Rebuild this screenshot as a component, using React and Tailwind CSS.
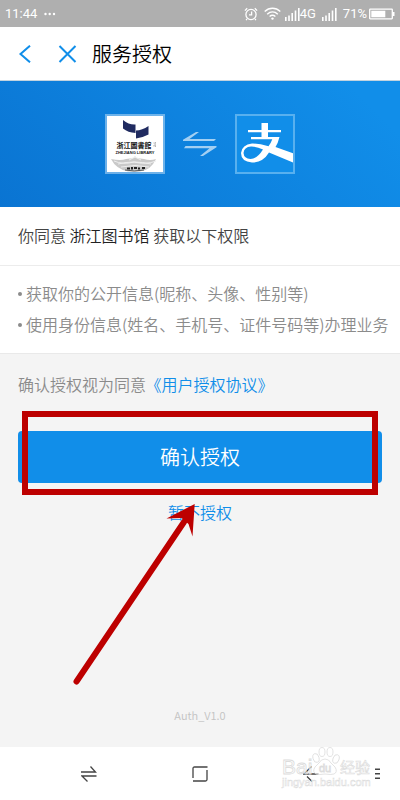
const ICON_TEXT = "'Noto Sans CJK SC', sans-serif";

function AlarmIcon() {
  return (
    <svg width="14" height="14" viewBox="0 0 14 14" fill="none" stroke="currentColor" strokeWidth="1.3" aria-hidden="true">
      <circle cx="7" cy="7.5" r="5.1" />
      <path d="M7.6 4.6v3.3H5M.9 3.6 3.2 1.2M13.1 3.6 10.8 1.2M3 12l-.9 1.2M11 12l.9 1.2" />
    </svg>
  );
}

function WifiIcon() {
  return (
    <svg width="17" height="13" viewBox="0 0 17 13" fill="none" stroke="currentColor" strokeWidth="1.4" aria-hidden="true">
      <path d="M.7 4.6c4.6-4.4 11-4.4 15.6 0M3.2 7.2c3.2-3 7.4-3 10.6 0M5.6 9.5c1.9-1.6 3.9-1.6 5.8 0" />
      <circle cx="8.5" cy="11.6" r="1.2" fill="currentColor" stroke="none" />
    </svg>
  );
}

function SignalIcon() {
  return (
    <svg width="15" height="14" viewBox="0 0 15 14" fill="currentColor" aria-hidden="true">
      <path d="M0 10h1.6v4H0zM3.2 8.4h1.6V14H3.2zM6.4 6h1.6v8H6.4zM9.7 3.5h1.6V14H9.7zM13 1h1.6v13H13z" />
    </svg>
  );
}

function BatteryIcon() {
  return (
    <svg width="26" height="12" viewBox="0 0 26 12" aria-hidden="true">
      <rect x=".7" y="1.2" width="22.6" height="9.6" rx=".5" fill="none" stroke="currentColor" strokeWidth="1.3" />
      <path d="M2.3 2.8h14v6.4h-14zM23.5 4h2v4h-2z" fill="currentColor" />
    </svg>
  );
}

function LibraryLogo() {
  return (
    <svg width="56" height="56" viewBox="0 0 56 56" role="img" aria-label="浙江图书馆">
      <path fill="#fff" d="M0 0h56v56H0z" />
      <path d="M16 4q6 5 12.500 4.500v8.500Q21 16.500 16 12.500z" fill="#202b60" />
      <path d="M29 14.500q6-.2 12.500-4.500v8.500Q36 21.500 29 22.500z" fill="#202b60" />
      <text x="27" y="32" textAnchor="middle" fontSize="7" fontWeight="700" fill="#111" fontFamily={ICON_TEXT}>浙江圖書館</text>
      <path d="M47 26.500v1M47 29v1.500M48.500 26l-.5 2 .5 3" stroke="#777" strokeWidth=".6" fill="none" />
      <text x="28" y="38" textAnchor="middle" fontSize="4" fontWeight="700" fill="#111" fontFamily="'Liberation Sans', sans-serif">ZHEJIANG LIBRARY</text>
      <path d="M4 43q10 2 15 0l8-1 1-2 1 2 8 1q6 2 12 0-5 11-16 12.500H21Q9 53 4 43z" fill="#c9c9c9" />
      <path d="M7 45q9 4 20 1 12 3 22-1M11 48q16-4 33 0M22 44l6-3 6 3M14 51q14-3 28 0" fill="none" stroke="#eee" strokeWidth="1" />
      <path d="M20 51.500h3v2h-3zM24 51h2v2.500h-2zM27 51h3v2h-3zM31 51.500h2v2h-2zM35 51h3v2h-3z" fill="#222" />
      <path d="M18 54q9 2 19 0" fill="none" stroke="#555" strokeWidth="1" />
    </svg>
  );
}

function AlipayLogo() {
  return (
    <svg width="56" height="56" viewBox="0 0 56 56" role="img" aria-label="支付宝">
      <path fill="#fff" d="M24.500 7H31v7h13v2.300H31v4.700h11.500Q41 27 38.500 31L56 37.300V46.500L32 36.500Q26 46.500 15 46.500 4 45.500 4 37 5 28.500 15 27.500q7-.2 16.500 2.800 2.500-3.300 3.800-7H14v-2.300h10.500v-4.700H11V14h13.500z" />
      <path fill="#118ee9" d="M6.500 37q.5-6 7.500-6.500 5.500-.2 12 3-6 9.500-12.500 9.500-6.500-.3-7-6z" />
    </svg>
  );
}

function ExchangeIcon() {
  return (
    <svg width="34" height="26" viewBox="0 0 34 26" fill="#fff" fillOpacity=".62" aria-hidden="true">
      <path d="M13 1h3L6.500 8H33l-2 2H0v-1.200zM2.500 15H33.500v1.200L20 25h-3l9.500-7.700H1z" />
    </svg>
  );
}

function Watermark() {
  return (
    <svg className="pointer-events-none absolute right-6 top-0" width="98" height="48" viewBox="0 0 98 48" fill="#fff" stroke="#dcdcdc" strokeWidth=".8" aria-hidden="true" fontFamily="'Liberation Sans', sans-serif">
      <g fillOpacity=".55">
        <text x="4" y="27" fontSize="21">Bai</text>
        <path d="M47 12q4 0 6 4l4 4q3 5-1 7-3 1-9 0-6 1-9 0-4-2-1-7l4-4q2-4 6-4z" />
        <ellipse cx="44" cy="5" rx="3" ry="4.500" />
        <ellipse cx="52" cy="5" rx="3" ry="4.500" />
        <ellipse cx="38" cy="11" rx="3" ry="4.500" transform="rotate(-15 38 11)" />
        <ellipse cx="58" cy="12" rx="3" ry="4.500" transform="rotate(20 58 12)" />
        <text x="41" y="25" fontSize="11">du</text>
        <text x="62" y="26" fontSize="15" fontWeight="400" strokeWidth=".6" fontFamily={ICON_TEXT}>经验</text>
        <text x="4" y="39" fontSize="11" strokeWidth=".5">jingyan.baidu.com</text>
      </g>
    </svg>
  );
}

function Arrow() {
  return (
    <svg className="pointer-events-none absolute left-1/2 top-0 -ml-32" width="128" height="184" viewBox="0 0 128 184" aria-hidden="true">
      <path d="M4.500 178.500 112 19" stroke="#bd0000" strokeWidth="6" strokeLinecap="round" />
      <path d="M122.700 1 94.500 15.500l15-.5 7 6 4 12.500z" fill="#bd0000" />
    </svg>
  );
}

export default function App() {
  return (
    <div className="flex min-h-screen flex-col bg-white font-['Noto_Sans_CJK_SC',sans-serif] font-[350] text-[#8b8b8b]">
      <div className="flex h-[27px] items-center bg-[#afafaf] px-[5px] font-[Roboto,sans-serif] text-[13px] font-normal text-white">
        <span>11:44</span>
        <svg className="ml-[7px]" width="12" height="4" viewBox="0 0 12 4" fill="currentColor" aria-hidden="true">
          <circle cx="1.500" cy="2" r="1.200" /><circle cx="5.700" cy="2" r="1.200" /><circle cx="10" cy="2" r="1.200" />
        </svg>
        <div className="ml-auto flex items-center">
          <AlarmIcon />
          <span className="ml-1.5 mr-1"><WifiIcon /></span>
          <SignalIcon />
          <span className="mr-1.5">4G</span>
          <SignalIcon />
          <span className="ml-1.5 mr-0.5">71%</span>
          <BatteryIcon />
        </div>
      </div>

      <header className="flex h-[54px] items-center border-b border-[#c3d3df] pl-[18px]">
        <button type="button" aria-label="返回" className="text-[#108ee9]">
          <svg width="14" height="18" viewBox="0 0 14 18" fill="none" stroke="currentColor" strokeWidth="2"><path d="M12 .7 2.500 9 12 17.300" /></svg>
        </button>
        <button type="button" aria-label="关闭" className="ml-[26px] text-[#108ee9]">
          <svg width="19" height="18" viewBox="0 0 19 18" fill="none" stroke="currentColor" strokeWidth="2"><path d="m1.500 1 16 16M17.500 1l-16 16" /></svg>
        </button>
        <h1 className="ml-[15px] text-[20px] font-[350] text-black">服务授权</h1>
      </header>

      <div className="flex items-center justify-center gap-[18px] bg-[linear-gradient(45deg,#0a74d2,#118ee9_90%)] py-[33px]">
        <div className="border-2 border-white/40"><LibraryLogo /></div>
        <ExchangeIcon />
        <div className="border-2 border-white/30 bg-[#118ee9]"><AlipayLogo /></div>
      </div>

      <p className="border-b border-[#ececec] px-[18px] pb-[15px] pt-[13px] text-[16px] leading-[30px] text-[#444]">
        你同意 <span className="text-[#222]">浙江图书馆</span> 获取以下权限
      </p>
      <ul className="pb-[13px] pl-[18px] pr-2 pt-[12px] text-[16px] leading-[31px]">
        <li className="flex items-center gap-1"><span className="size-1 shrink-0 rounded-full bg-[#8b8b8b]" />获取你的公开信息(昵称、头像、性别等)</li>
        <li className="flex items-center gap-1"><span className="size-1 shrink-0 rounded-full bg-[#8b8b8b]" />使用身份信息(姓名、手机号、证件号码等)办理业务</li>
      </ul>

      <main className="flex grow flex-col border-t border-[#e9e9e9] bg-[#f4f4f4] px-[18px] text-[16px]">
        <p className="pt-[15px] leading-[30px]">
          确认授权视为同意 <a href="#agreement" className="-ml-1 text-[#108ee9]">《用户授权协议》</a>
        </p>
        <div className="relative mt-[32px]">
          <button type="button" className="h-[52px] w-full rounded-sm bg-[#118ee9] text-[20px] text-white">确认授权</button>
          <div className="pointer-events-none absolute -bottom-3 -top-5 left-1 right-1 border-6 border-[#bd0000]" />
        </div>
        <div className="relative mt-5 flex justify-center">
          <button type="button" className="leading-[18px] text-[#108ee9]">暂不授权</button>
          <Arrow />
        </div>
        <p className="mt-auto pb-[23px] text-center text-[11px] leading-[18px] text-[#c3c3c3]">Auth_V1.0</p>
      </main>

      <nav className="relative flex h-[53px] items-center bg-white text-[#444]">
        <div className="grid grow grid-cols-3 px-[33px]">
          <button type="button" aria-label="切换" className="flex justify-center">
            <svg width="16" height="16" viewBox="0 0 16 16" fill="none" stroke="currentColor" strokeWidth="1.300"><path d="M9.500.5 14.500 6H0M15.500 10H1l5.500 5.500" /></svg>
          </button>
          <button type="button" aria-label="主页" className="flex justify-center">
            <svg width="16" height="16" viewBox="0 0 16 16" fill="none" stroke="currentColor" strokeWidth="1.300"><path d="M15.500 1H2.500Q1 1 1 2.500V12M1 15H13.500q1.500 0 1.500-1.500V4" /></svg>
          </button>
          <button type="button" aria-label="后退" className="flex justify-center">
            <svg width="16" height="16" viewBox="0 0 16 16" fill="none" stroke="currentColor" strokeWidth="1.300"><path d="M8.500.5 1 8h14.500M4 10.500 9 15.500" /></svg>
          </button>
        </div>
        <Watermark />
        <button type="button" aria-label="菜单" className="absolute right-[19px]">
          <svg width="6" height="12" viewBox="0 0 6 12" fill="currentColor"><path d="M0 .5h5v1.500H0zM0 5h5v1.500H0zM0 9.500h5V11H0z" /></svg>
        </button>
      </nav>
    </div>
  );
}
